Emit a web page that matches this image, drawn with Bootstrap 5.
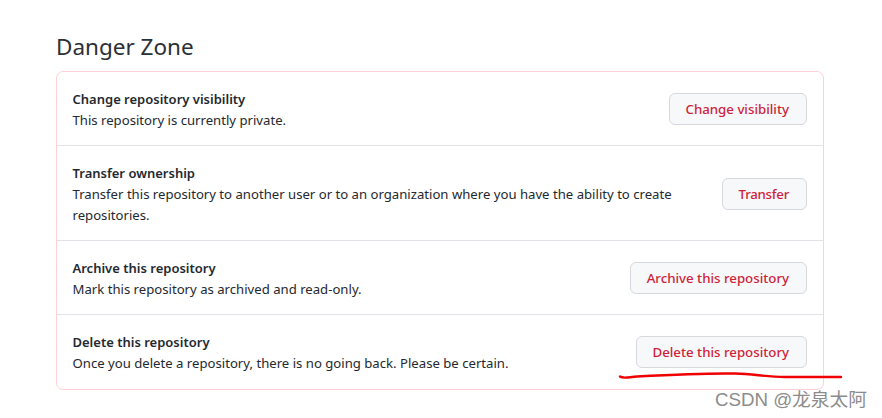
<!DOCTYPE html>
<html lang="en">
<head>
  <meta charset="UTF-8" />
  <meta name="viewport" content="width=device-width, initial-scale=1.0"/>
  <title>Danger Zone</title>
  <link href="https://cdn.jsdelivr.net/npm/bootstrap@5.3.0/dist/css/bootstrap.min.css" rel="stylesheet">
  <style>
    body {
      font-family: "Noto Sans", "Open Sans", sans-serif;
      color: #24292f;
      background: #fff;
      width: 882px;
      height: 418px;
      overflow: hidden;
      position: relative;
    }
    .page-wrap {
      padding: 32px 58px 0 56px;
    }
    .zone-title {
      font-size: 22.5px;
      font-weight: 400;
      line-height: 30px;
      margin: 0 0 9px;
      color: #2b3036;
    }
    .zone-box {
      border: 1px solid #ffd0d5;
      border-radius: 7px;
      height: 319px;
    }
    .zone-row {
      border-bottom: 1px solid #e2e3e8;
      padding: 0 16px 0 15.5px;
    }
    .zone-row:last-child {
      border-bottom: 0;
    }
    .row-a { height: 74px; }
    .row-b { height: 95px; padding-top: 2px; }
    .row-c { height: 74px; }
    .row-d { height: 74px; }
    .row-a .zone-text, .row-c .zone-text, .row-d .zone-text {
      padding-top: 2px;
    }
    .zone-name {
      font-size: 13px;
      font-weight: 600;
      line-height: 21px;
    }
    .zone-desc {
      font-size: 13.15px;
      line-height: 21px;
      max-width: 610px;
    }
    .btn-zone {
      background: #f6f8fa;
      border: 1px solid #d5d8dd;
      border-radius: 6px;
      color: #cf2238;
      font-size: 13.25px;
      font-weight: 500;
      line-height: 20px;
      padding: 5px 17px 5px 16px;
      height: 32px;
      white-space: nowrap;
    }
    .btn-zone:hover {
      background: #f3f4f6;
      color: #cf2238;
    }
    .btn-short {
      letter-spacing: -0.25px;
    }
    .red-stroke {
      position: absolute;
      left: 615px;
      top: 370px;
    }
    .csdn-mark {
      position: absolute;
      left: 715px;
      top: 388px;
      font-family: "Liberation Sans", "Noto Sans CJK SC", sans-serif;
      font-size: 18.7px;
      line-height: 24px;
      color: #8c8c8c;
      white-space: nowrap;
    }
  </style>
</head>
<body>
  <div class="page-wrap">
    <h2 class="zone-title">Danger Zone</h2>
    <div class="zone-box">
      <div class="zone-row row-a d-flex justify-content-between align-items-center">
        <div class="zone-text">
          <div class="zone-name">Change repository visibility</div>
          <div class="zone-desc">This repository is currently private.</div>
        </div>
        <button type="button" class="btn btn-zone">Change visibility</button>
      </div>
      <div class="zone-row row-b d-flex justify-content-between align-items-center">
        <div class="zone-text">
          <div class="zone-name">Transfer ownership</div>
          <div class="zone-desc">Transfer this repository to another user or to an organization where you have the ability to create repositories.</div>
        </div>
        <button type="button" class="btn btn-zone btn-short">Transfer</button>
      </div>
      <div class="zone-row row-c d-flex justify-content-between align-items-center">
        <div class="zone-text">
          <div class="zone-name">Archive this repository</div>
          <div class="zone-desc">Mark this repository as archived and read-only.</div>
        </div>
        <button type="button" class="btn btn-zone">Archive this repository</button>
      </div>
      <div class="zone-row row-d d-flex justify-content-between align-items-center">
        <div class="zone-text">
          <div class="zone-name">Delete this repository</div>
          <div class="zone-desc">Once you delete a repository, there is no going back. Please be certain.</div>
        </div>
        <button type="button" class="btn btn-zone">Delete this repository</button>
      </div>
    </div>
  </div>

  <!-- hand-drawn underline and watermark sit over the page -->
  <svg class="red-stroke" width="230" height="14" viewBox="0 0 230 14" fill="none">
    <path d="M5 6.500C8 9 14 7 22 6.500C50 5 90 3 120 3.500C140 4 150 7 170 7L226 7" stroke="#f00000" stroke-width="2.400" stroke-linecap="round"/>
  </svg>
  <div class="csdn-mark">CSDN @龙泉太阿</div>

  <script src="https://cdn.jsdelivr.net/npm/bootstrap@5.3.0/dist/js/bootstrap.bundle.min.js"></script>
</body>
</html>
